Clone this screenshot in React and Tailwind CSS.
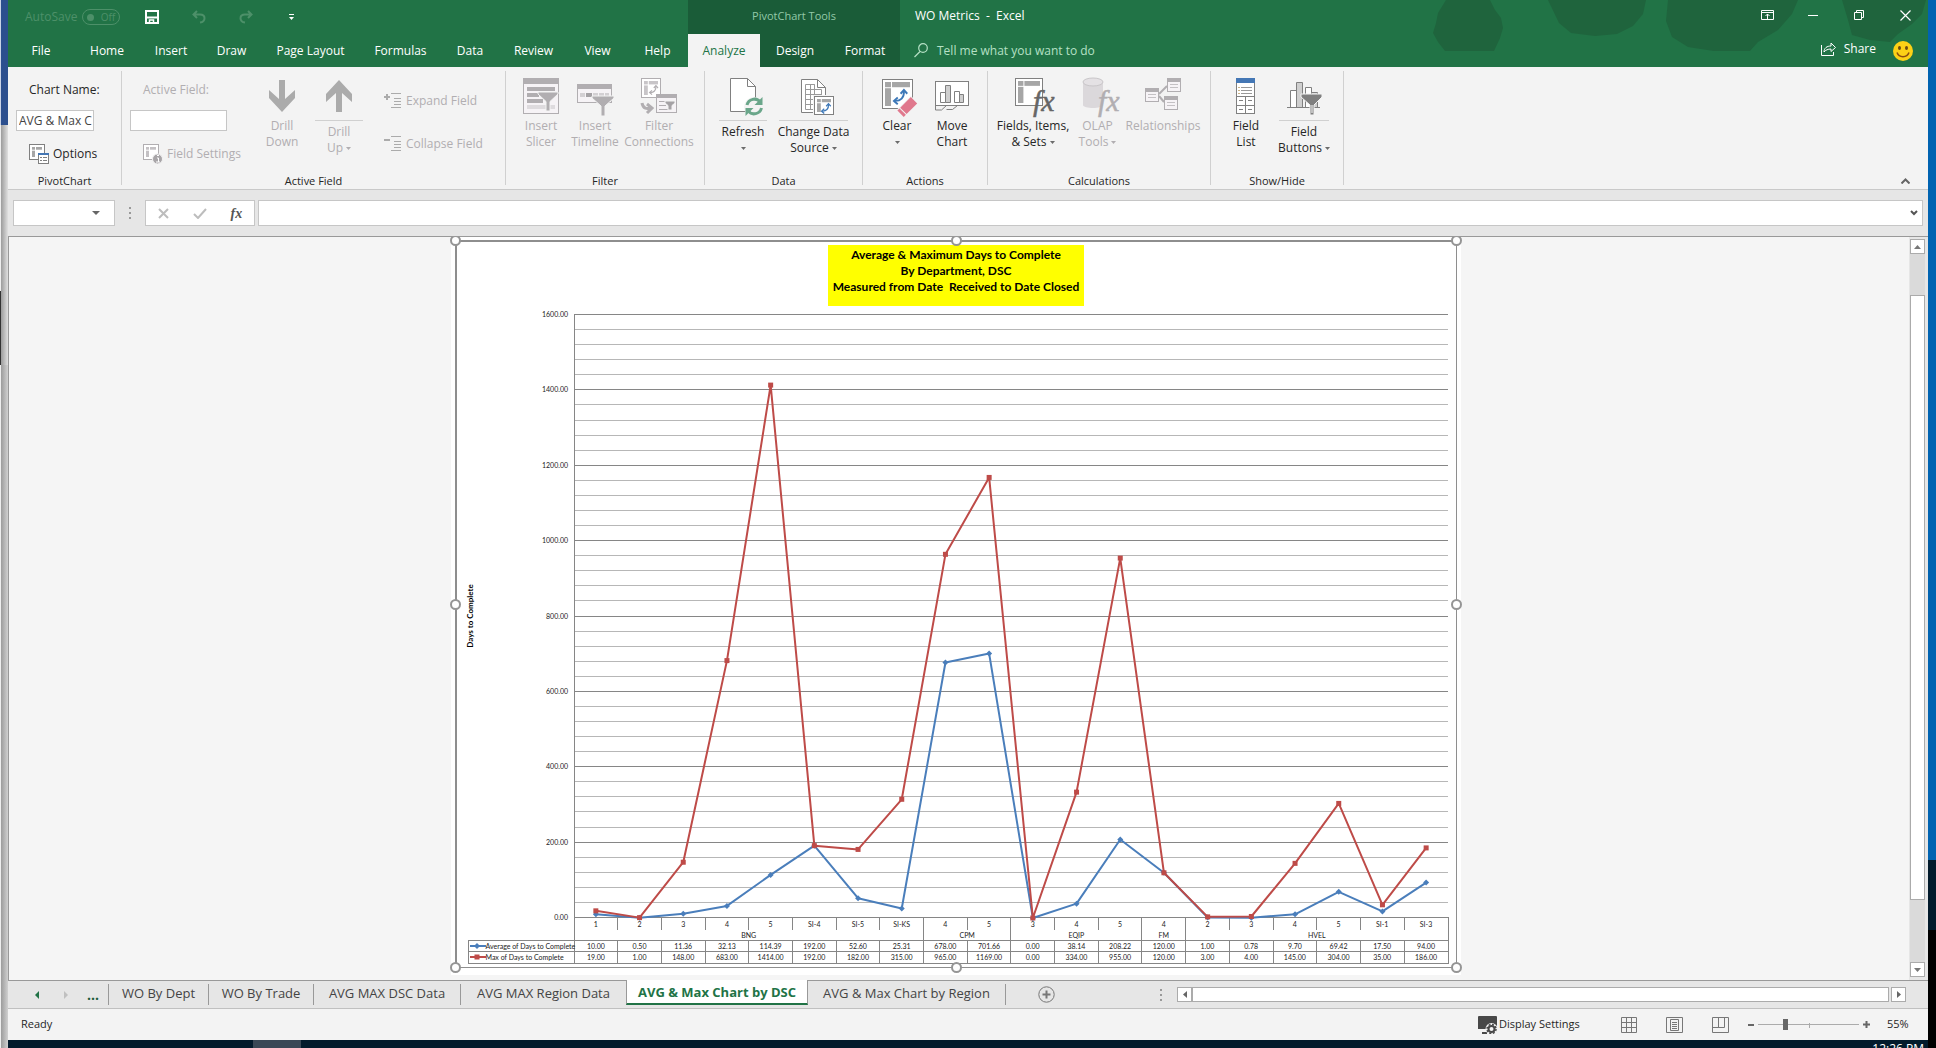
import clsx from 'clsx'

const categories = ['1', '2', '3', '4', '5', 'SI-4', 'SI-5', 'SI-KS', '4', '5', '3', '4', '5', '4', '2', '3', '4', '5', 'SI-1', 'SI-3']
const groups = [
  { name: 'BNG', span: 8 },
  { name: 'CPM', span: 2 },
  { name: 'EQIP', span: 3 },
  { name: 'FM', span: 1 },
  { name: 'HVEL', span: 6 },
]
const series = [
  {
    name: 'Average of Days to Complete',
    color: '#4a7ebb',
    marker: 'diamond',
    values: [10, 0.5, 11.36, 32.13, 114.39, 192, 52.6, 25.31, 678, 701.66, 0, 38.14, 208.22, 120, 1, 0.78, 9.7, 69.42, 17.5, 94],
  },
  {
    name: 'Max of Days to Complete',
    color: '#be4b48',
    marker: 'square',
    values: [19, 1, 148, 683, 1414, 192, 182, 315, 965, 1169, 0, 334, 955, 120, 3, 4, 145, 304, 35, 186],
  },
]

const tabs = [
  { label: 'File', width: 'w-[66px]' },
  { label: 'Home', width: 'w-[66px]' },
  { label: 'Insert', width: 'w-[62px]' },
  { label: 'Draw', width: 'w-[59px]' },
  { label: 'Page Layout', width: 'w-[99px]' },
  { label: 'Formulas', width: 'w-[81px]' },
  { label: 'Data', width: 'w-[58px]' },
  { label: 'Review', width: 'w-[69px]' },
  { label: 'View', width: 'w-[59px]' },
  { label: 'Help', width: 'w-[61px]' },
]

const sheets = [
  { label: 'WO By Dept', width: 'w-[100px]' },
  { label: 'WO By Trade', width: 'w-[105px]' },
  { label: 'AVG MAX DSC Data', width: 'w-[147px]' },
  { label: 'AVG MAX Region Data', width: 'w-[165px]', last: true },
  { label: 'AVG & Max Chart by DSC', width: 'w-[182px]', active: true },
  { label: 'AVG & Max Chart by Region', width: 'w-[198px]' },
]

/* ---------- icons ---------- */

function Icon({ children, size = 40 }) {
  return (
    <svg width={size} height={size} viewBox={`0 0 ${size} ${size}`} className="block shrink-0 overflow-visible" aria-hidden="true">
      {children}
    </svg>
  )
}

function PivotGrid({ x, y, w, h, line = '#808080', fill = '#a6a6a6' }) {
  return (
    <g>
      <rect x={x + 0.5} y={y + 0.5} width={w} height={h} fill="#fff" stroke={line} />
      <rect x={x + 3} y={y + 3} width={w * 0.2} height={h * 0.18} fill={fill} />
      <rect x={x + 4 + w * 0.2} y={y + 3} width={w * 0.8 - 6} height={h * 0.18} fill={fill} />
      <rect x={x + 3} y={y + 4 + h * 0.18} width={w * 0.2} height={h * 0.82 - 6} fill={fill} />
    </g>
  )
}

function SwapArrows({ x, y, s = 1, color = '#3d78b8' }) {
  return (
    <g transform={`translate(${x} ${y}) scale(${s})`} fill="none" stroke={color} strokeWidth="2">
      <path d="M1.500 12.500C8 13 12 9 11.500 2" />
      <path d="M8 5l3.500-4L15 5M5 9l-4 3.500L5 16" />
    </g>
  )
}

function Funnel({ x, y, w, h, color }) {
  return (
    <path
      transform={`translate(${x} ${y})`}
      d={`M0 0H${w}V2L${w / 2 + 2} ${h * 0.5}V${h}H${w / 2 - 2}V${h * 0.5}L0 2Z`}
      fill={color}
      stroke="#f3f3f3"
      strokeWidth="1"
    />
  )
}

function DrillIcon({ up }) {
  return (
    <Icon>
      <path
        d="M17 4h6v19l10-9v8L20 36 7 22v-8l10 9z"
        fill="#ababab"
        transform={up ? 'rotate(180 20 20)' : undefined}
      />
    </Icon>
  )
}

function SlicerIcon() {
  return (
    <Icon>
      <rect x="2.500" y="2.500" width="35" height="35" fill="#f6f3f6" stroke="#b1aeb1" />
      <path d="M2 2h36v6H2z" fill="#b1aeb1" />
      <path d="M6 11h28v4H6zM6 17h12v4H6zM6 23h16v4H6z" fill="#b1aeb1" />
      <path d="M6 29h28v4H6z" fill="#dedbde" />
      <Funnel x={17} y={16} w={20} h={19} color="#b1aeb1" />
    </Icon>
  )
}

function TimelineIcon() {
  return (
    <Icon>
      <rect x="2.500" y="8.500" width="34" height="18" fill="#f6f3f6" stroke="#b1aeb1" />
      <path d="M2 8h35v5H2z" fill="#b1aeb1" />
      <path d="M5 17h5v4H5zM18 17h5v4h-5zM24 17h5v4h-5zM30 17h4v4h-4z" fill="#d3d0d3" />
      <path d="M11 17h6v4h-6z" fill="#a5a2a5" />
      <Funnel x={17} y={20} w={22} h={20} color="#b1aeb1" />
    </Icon>
  )
}

function FilterConnectionsIcon() {
  return (
    <Icon>
      <PivotGrid x={2} y={2} w={19} h={19} line="#b1aeb1" fill="#c8c5c8" />
      <SwapArrows x={10} y={9} s={0.6} color="#b1aeb1" />
      <rect x="17.500" y="18.500" width="20" height="18" fill="#f6f3f6" stroke="#b1aeb1" />
      <path d="M17 18h21v4H17z" fill="#b1aeb1" />
      <path d="M20 25h8v1h-8zM20 29h7v1h-7zM20 33h10v1H20z" fill="#b1aeb1" />
      <Funnel x={26} y={25} w={10} h={9} color="#a5a2a5" />
      <path d="M3 27c1 6 5 6 9 5M8 28l5 4-5 5" fill="none" stroke="#b1aeb1" strokeWidth="3" />
    </Icon>
  )
}

function RefreshIcon() {
  return (
    <Icon>
      <path d="M7.500 2.500h17l8 8v25h-25z" fill="#fff" stroke="#808080" />
      <path d="M24.500 2.500v8h8" fill="none" stroke="#808080" />
      <circle cx="31" cy="31" r="10" fill="#f3f3f3" />
      <path d="M24 29c1.500-6 9.500-8 13-3M38.500 32c-1.500 6-9.500 8-13 3" fill="none" stroke="#6aa68a" strokeWidth="3" />
      <path d="M39.500 21v8h-8zM22.500 40v-8h8z" fill="#6aa68a" />
    </Icon>
  )
}

function ChangeSourceIcon() {
  return (
    <Icon>
      <path d="M7.500 3.500h16l8 8v25h-24z" fill="#fff" stroke="#808080" />
      <path d="M23.500 3.500v8h8" fill="none" stroke="#808080" />
      <path d="M11.500 8.500h9v5h7v20h-16zM11.500 13.500h9M11.500 18.500h16M11.500 23.500h16M11.500 28.500h16M16.500 8.500v25M20.500 8.500v25" fill="none" stroke="#999" />
      <rect x="19" y="19" width="21" height="20" fill="#f3f3f3" />
      <PivotGrid x={20} y={20} w={19} h={18} />
      <SwapArrows x={27} y={27} s={0.65} />
    </Icon>
  )
}

function ClearIcon() {
  return (
    <Icon>
      <PivotGrid x={5} y={3} w={30} h={29} />
      <SwapArrows x={16} y={13} s={0.95} />
      <g transform="rotate(-45 31 31)">
        <rect x="20" y="25" width="21" height="11" rx="1" fill="#f3f3f3" />
        <path d="M25 26h15v9H25zM21 26h3v9h-3z" fill="#e0788d" />
      </g>
    </Icon>
  )
}

function MoveChartIcon() {
  return (
    <Icon>
      <rect x="3.500" y="5.500" width="33" height="24" fill="#fff" stroke="#808080" />
      <path d="M8.500 16.500h5v10h-5zM22.500 15.500h5v11h-5z" fill="#fff" stroke="#808080" />
      <path d="M13.500 9.500h5v17h-5zM27.500 18.500h4v8h-4z" fill="#cfcfcf" stroke="#808080" />
      <path d="M3.500 29.500v4.500h6l5-4.500M14.500 33.500h6l5-4" fill="none" stroke="#808080" />
    </Icon>
  )
}

function Fx({ color }) {
  return (
    <text x="20" y="35" fontFamily="Liberation Serif, serif" fontStyle="italic" fontSize="30" fill={color} stroke={color} strokeWidth="0.500">
      fx
    </text>
  )
}

function FieldsItemsIcon() {
  return (
    <Icon>
      <PivotGrid x={2} y={2} w={27} h={27} />
      <Fx color="#666" />
    </Icon>
  )
}

function OlapIcon() {
  return (
    <Icon>
      <path d="M5 6v23c0 4 20 4 20 0V6z" fill="#dbd8db" />
      <ellipse cx="15" cy="6" rx="10" ry="4" fill="#e4e1e4" stroke="#c9c6c9" />
      <Fx color="#b1aeb1" />
    </Icon>
  )
}

function RelationshipsIcon() {
  const boxes = [[2, 12], [24, 2], [21, 20]]
  return (
    <Icon>
      <path d="M16 18l8-8M16 20l5 6" stroke="#b1aeb1" strokeWidth="2" />
      {boxes.map(([x, y]) => (
        <g key={x}>
          <rect x={x + 0.5} y={y + 0.5} width="13" height="13" fill="#f6f3f6" stroke="#b1aeb1" />
          <path d={`M${x} ${y}h14v4h-14z`} fill="#b1aeb1" />
          <path d={`M${x + 3} ${y + 6.5}h8M${x + 3} ${y + 9.5}h8`} stroke="#c4c1c4" />
        </g>
      ))}
    </Icon>
  )
}

function FieldListIcon() {
  return (
    <Icon>
      <rect x="10.500" y="2.500" width="18" height="35" fill="#fff" stroke="#808080" />
      <path d="M10 2h19v5H10z" fill="#4477b5" />
      <path d="M15 11.500h11M15 14.500h11M15 17.500h11" stroke="#999" />
      <path d="M12 11.500h2M12 14.500h2M12 17.500h2" stroke="#c9b285" />
      <path d="M10.500 20.500h18M10.500 29.500h18M19.500 20.500v17M13 24.500h4M22 24.500h4M13 33.500h4M22 33.500h4" stroke="#808080" />
    </Icon>
  )
}

function FieldButtonsIcon() {
  return (
    <Icon>
      <path d="M6.500 14.500h6v17h-6zM21.500 11.500h6v20h-6z" fill="#fff" stroke="#808080" />
      <path d="M12.500 6.500h6v25h-6zM27.500 16.500h6v15h-6z" fill="#cfcfcf" stroke="#808080" />
      <path d="M3 31.500h33" stroke="#808080" />
      <path d="M17 18h21v3l-8 8v10h-4V29l-9-8z" fill="#808080" stroke="#f3f3f3" />
      <path d="M28 29v8" stroke="#fff" />
    </Icon>
  )
}

function OptionsIcon({ disabled }) {
  const line = disabled ? '#b1aeb1' : '#808080'
  return (
    <Icon size={20}>
      <PivotGrid x={0} y={0} w={15} h={15} line={line} fill={disabled ? '#c4c1c4' : '#a6a6a6'} />
      {disabled ? (
        <>
          <circle cx="14.500" cy="15" r="5" fill="#a8a5a8" stroke="#f3f3f3" />
          <path d="M14 11.500h2M14 14h1.500v4M13 18h4" stroke="#fff" fill="none" />
        </>
      ) : (
        <>
          <rect x="9.500" y="9.500" width="10" height="10" fill="#fff" stroke="#808080" />
          <path d="M9 9h11v2H9z" fill="#4477b5" />
          <path d="M11 13.500h2M11 16.500h2M14 13.500h4M14 16.500h4" stroke="#808080" />
        </>
      )}
    </Icon>
  )
}

function ExpandIcon({ minus }) {
  return (
    <Icon size={18}>
      <path d={minus ? 'M0 5h6' : 'M0 5h6M3 2v6'} stroke="#ababab" strokeWidth="2" />
      <path d="M7 1.500h10M10 6.500h7M10 9.500h7M10 12.500h7M7 15.500h10" stroke="#ababab" fill="none" />
    </Icon>
  )
}

function Caret({ className }) {
  return (
    <svg width="5" height="3" viewBox="0 0 5 3" className={clsx('inline-block shrink-0 fill-current', className)} aria-hidden="true">
      <path d="M0 0h5L2.500 3z" />
    </svg>
  )
}

/* ---------- title bar and tabs ---------- */

function Clouds() {
  return (
    <svg className="absolute right-0 top-0" width="500" height="67" viewBox="0 0 500 67" aria-hidden="true">
      <g fill="#1f643d">
        <path d="M18 0h44l5 10 6 8 2 10-3 10-6 13H17l-7-9-5-9 3-10 2-10z" />
        <path d="M120 0h98l-3 14-10 12-16 8-22 2-24-3-12-10z" />
        <path d="M240 0h130l-6 14-14 16-20 12-8 9h-36l-26-4-16-10-6-16z" />
        <path d="M414 0h84l-4 14-10 10-14 10-8 8-20-2-18-5-4-15z" />
      </g>
    </svg>
  )
}

function TitleBar() {
  return (
    <div className="flex h-[34px]">
      <div className="flex w-[680px] items-center pl-[17px]">
        <span className="w-[57px] text-[#4d9069]">AutoSave</span>
        <button aria-label="AutoSave off" className="flex h-4 w-[38px] items-center justify-around rounded-full border border-[#4d9069] text-[10px] text-[#4d9069]">
          <span className="size-[7px] rounded-full bg-[#4d9069]" />
          Off
        </button>
        <button aria-label="Save" className="ml-[25px]">
          <svg width="14" height="14" viewBox="0 0 14 14" fill="none" stroke="#fff" strokeWidth="2">
            <path d="M1 1h12v12H1zM2 7.500h10" />
            <path d="M4.500 13v-3h4v3" strokeWidth="1.500" />
          </svg>
        </button>
        <button aria-label="Undo" className="ml-[33px]">
          <svg width="14" height="14" viewBox="0 0 14 14" fill="none" stroke="#4d9069" strokeWidth="2">
            <path d="M5 1L1.500 4.500 5 8M2 4.500h6c6 0 6 7 0 8" />
          </svg>
        </button>
        <button aria-label="Redo" className="ml-[33px]">
          <svg width="14" height="14" viewBox="0 0 14 14" fill="none" stroke="#4d9069" strokeWidth="2">
            <path d="M9 1l3.500 3.500L9 8M12 4.500H6c-6 0-6 7 0 8" />
          </svg>
        </button>
        <button aria-label="Customize toolbar" className="ml-[36px] flex flex-col items-center gap-[2px] text-white">
          <span className="h-px w-[5px] bg-white" />
          <Caret />
        </button>
      </div>
      <div className="flex w-[212px] items-center justify-center bg-[#1a5c38] pb-[2px] text-[11px] text-[#93c9a8]">PivotChart Tools</div>
      <div className="flex flex-1 items-center whitespace-pre pl-[15px] pb-[2px] text-white">WO Metrics  -  Excel</div>
      <div className="relative flex pb-1 text-white">
        <button aria-label="Ribbon display options" className="flex w-[46px] items-center justify-center">
          <svg width="13" height="10" viewBox="0 0 13 10" fill="none" stroke="currentColor">
            <path d="M.5.5h12v9H.5zM.5 2.500h12M6.500 9V4M4.500 6l2-2 2 2" />
          </svg>
        </button>
        <button aria-label="Minimize" className="flex w-[46px] items-center justify-center">
          <span className="h-px w-[10px] bg-white" />
        </button>
        <button aria-label="Restore" className="flex w-[46px] items-center justify-center">
          <svg width="10" height="10" viewBox="0 0 10 10" fill="none" stroke="currentColor">
            <path d="M.5 2.500h7v7h-7zM2.500 2.500v-2h7v7h-2" />
          </svg>
        </button>
        <button aria-label="Close" className="flex w-[46px] items-center justify-center">
          <svg width="11" height="11" viewBox="0 0 11 11" fill="none" stroke="currentColor" strokeWidth="1.200">
            <path d="M.5.5l10 10M10.500.5l-10 10" />
          </svg>
        </button>
      </div>
    </div>
  )
}

function TabRow() {
  return (
    <div className="flex h-[33px] text-white">
      {tabs.map((tab) => (
        <button key={tab.label} className={clsx('shrink-0 text-center', tab.width)}>{tab.label}</button>
      ))}
      <div className="flex w-[212px] shrink-0 bg-[#1a5c38]">
        <button className="w-[72px] bg-[#f3f3f3] text-[#217346]">Analyze</button>
        <button className="w-[70px]">Design</button>
        <button className="w-[70px]">Format</button>
      </div>
      <button className="flex flex-1 items-center gap-[9px] pl-[14px] text-[#b5e0c5]">
        <svg width="14" height="15" viewBox="0 0 14 15" fill="none" stroke="currentColor" strokeWidth="1.200">
          <circle cx="9" cy="5" r="4.300" />
          <path d="M6 8.500L.5 14" />
        </svg>
        Tell me what you want to do
      </button>
      <button className="relative mr-[17px] flex items-center gap-2 pb-1">
        <svg width="15" height="14" viewBox="0 0 15 14" fill="none" stroke="currentColor">
          <path d="M.5 3v10.500h12V10M3 10c0-4 3-6 7-6V1l4.500 4.500L10 9.500V7C7 7 4.500 8 3 10z" />
        </svg>
        Share
      </button>
      <button aria-label="Send a smile" className="relative mr-[15px]">
        <svg width="20" height="20" viewBox="0 0 20 20">
          <circle cx="10" cy="10" r="10" fill="#fcd116" />
          <ellipse cx="6.500" cy="7" rx="1.500" ry="2" fill="#6b4a12" />
          <ellipse cx="13.500" cy="7" rx="1.500" ry="2" fill="#6b4a12" />
          <path d="M4 11.500c2 5.500 10 5.500 12 0" fill="none" stroke="#8a4d12" strokeWidth="1.500" />
        </svg>
      </button>
    </div>
  )
}

/* ---------- ribbon ---------- */

function RibbonGroup({ label, width, className, children }) {
  return (
    <section className={clsx('my-1 flex shrink-0 flex-col border-r border-[#d0d0d0]', width)}>
      <div className={clsx('flex flex-1', className)}>{children}</div>
      <div className="h-[10px] text-center text-[11px] leading-[12px] text-[#262626]">{label}</div>
    </section>
  )
}

function BigButton({ icon, lines, width, split, caret, disabled }) {
  return (
    <button
      disabled={disabled}
      className={clsx('flex shrink-0 flex-col items-center pt-[5px] leading-4', width, disabled ? 'text-[#b1aeb1]' : 'text-[#262626]')}
    >
      {icon}
      {split && <span className="mt-1 mb-[3px] h-px w-full bg-[#d0d0d0]" />}
      <span className={clsx('flex flex-col items-center whitespace-nowrap', !split && 'mt-[2px]')}>
        {lines.map((line, i) => (
          <span key={i} className="flex h-4 items-center gap-[3px]">
            {line}
            {caret && i === lines.length - 1 && <Caret className={disabled ? 'text-[#b1aeb1]' : 'text-[#6b6b6b]'} />}
          </span>
        ))}
      </span>
    </button>
  )
}

function Ribbon() {
  return (
    <div className="flex h-[123px] shrink-0 border-b border-[#c9c9c9] bg-[#f3f3f3]">
      <RibbonGroup label="PivotChart" width="w-[114px]" className="flex-col pl-2 pt-[10px]">
        <label htmlFor="chart-name" className="pl-[13px] leading-[18px] text-[#262626]">Chart Name:</label>
        <input id="chart-name" defaultValue="AVG & Max C" className="mt-[11px] h-[21px] w-[78px] border border-[#c6c6c6] bg-white pl-[2px] text-[#444] outline-none" />
        <button className="mt-[13px] flex items-center gap-1 pl-[13px] text-[#262626]">
          <OptionsIcon />
          Options
        </button>
      </RibbonGroup>

      <RibbonGroup label="Active Field" width="w-[384px]">
        <div className="flex w-[137px] flex-col pl-2 pt-[10px] text-[#b1aeb1]">
          <label htmlFor="active-field" className="pl-[13px] leading-[18px]">Active Field:</label>
          <input id="active-field" disabled className="mt-[11px] h-[21px] w-[97px] border border-[#c6c6c6] bg-white" />
          <button disabled className="mt-[13px] flex items-center gap-1 whitespace-nowrap pl-[13px]">
            <OptionsIcon disabled />
            Field Settings
          </button>
        </div>
        <BigButton icon={<DrillIcon />} lines={['Drill', 'Down']} width="w-[46px]" disabled />
        <div className="w-[10px]" />
        <BigButton icon={<DrillIcon up />} lines={['Drill', 'Up']} width="w-[48px]" split caret disabled />
        <div className="flex flex-col gap-[25px] pl-[21px] pt-[21px] text-[#b1aeb1]">
          <button disabled className="flex items-center gap-1">
            <ExpandIcon />
            Expand Field
          </button>
          <button disabled className="flex items-center gap-1">
            <ExpandIcon minus />
            Collapse Field
          </button>
        </div>
      </RibbonGroup>

      <RibbonGroup label="Filter" width="w-[199px]" className="gap-px pl-[10px]">
        <BigButton icon={<SlicerIcon />} lines={['Insert', 'Slicer']} width="w-[50px]" disabled />
        <BigButton icon={<TimelineIcon />} lines={['Insert', 'Timeline']} width="w-[56px]" disabled />
        <BigButton icon={<FilterConnectionsIcon />} lines={['Filter', 'Connections']} width="w-[70px]" disabled />
      </RibbonGroup>

      <RibbonGroup label="Data" width="w-[158px]" className="gap-3 pl-[14px]">
        <BigButton icon={<RefreshIcon />} lines={['Refresh', '']} width="w-[48px]" split caret />
        <BigButton icon={<ChangeSourceIcon />} lines={['Change Data', 'Source']} width="w-[69px]" split caret />
      </RibbonGroup>

      <RibbonGroup label="Actions" width="w-[125px]" className="gap-[7px] pl-[10px]">
        <BigButton icon={<ClearIcon />} lines={['Clear', '']} width="w-[48px]" caret />
        <BigButton icon={<MoveChartIcon />} lines={['Move', 'Chart']} width="w-[48px]" />
      </RibbonGroup>

      <RibbonGroup label="Calculations" width="w-[223px]" className="gap-[6px] pl-[10px]">
        <BigButton icon={<FieldsItemsIcon />} lines={['Fields, Items,', '& Sets']} width="w-[70px]" caret />
        <BigButton icon={<OlapIcon />} lines={['OLAP', 'Tools']} width="w-[47px]" caret disabled />
        <BigButton icon={<RelationshipsIcon />} lines={['Relationships']} width="w-[72px]" disabled />
      </RibbonGroup>

      <RibbonGroup label="Show/Hide" width="w-[133px]" className="gap-[10px] pl-3">
        <BigButton icon={<FieldListIcon />} lines={['Field', 'List']} width="w-[46px]" />
        <BigButton icon={<FieldButtonsIcon />} lines={['Field', 'Buttons']} width="w-[50px]" split caret />
      </RibbonGroup>

      <div className="flex flex-1 items-end justify-end pb-[5px] pr-[18px]">
        <button aria-label="Collapse the ribbon">
          <svg width="9" height="6" viewBox="0 0 9 6" fill="none" stroke="#666" strokeWidth="2">
            <path d="M.5 5.500l4-4 4 4" />
          </svg>
        </button>
      </div>
    </div>
  )
}

function FormulaBar() {
  return (
    <div className="flex h-[46px] shrink-0 items-center bg-[#e6e6e6] pl-[5px] pr-[5px]">
      <div className="flex h-[26px] w-[102px] items-center border border-[#c6c6c6] bg-white">
        <input aria-label="Name box" className="w-[78px] outline-none" />
        <button aria-label="Name list">
          <svg width="8" height="4" viewBox="0 0 8 4" className="fill-[#666]"><path d="M0 0h8L4 4z" /></svg>
        </button>
      </div>
      <Dots className="ml-[14px]" />
      <div className="ml-[14px] flex h-[26px] w-[110px] items-center justify-around border border-[#c6c6c6] bg-white">
        <button aria-label="Cancel">
          <svg width="12" height="11" viewBox="0 0 12 11" fill="none" stroke="#bdbdbd" strokeWidth="2"><path d="M1 1l9 9M10 1l-9 9" /></svg>
        </button>
        <button aria-label="Enter">
          <svg width="14" height="11" viewBox="0 0 14 11" fill="none" stroke="#bdbdbd" strokeWidth="2"><path d="M1 6l4 4 8-9" /></svg>
        </button>
        <button className="font-['Liberation_Serif',serif] text-[14px] font-bold italic text-[#555]">fx</button>
      </div>
      <div className="ml-[3px] flex h-[26px] flex-1 items-center border border-[#c6c6c6] bg-white pr-1">
        <input aria-label="Formula" className="flex-1 outline-none" />
        <button aria-label="Expand formula bar">
          <svg width="8" height="6" viewBox="0 0 8 6" fill="none" stroke="#555" strokeWidth="2"><path d="M1 1l3 3 3-3" /></svg>
        </button>
      </div>
    </div>
  )
}

function Dots({ className }) {
  return (
    <span className={clsx('flex flex-col gap-[3px]', className)}>
      <span className="size-[2px] bg-[#999]" />
      <span className="size-[2px] bg-[#999]" />
      <span className="size-[2px] bg-[#999]" />
    </span>
  )
}

/* ---------- chart ---------- */

const PLOT = { left: 117, right: 991, top: 8, bottom: 611, max: 1600 }
const xAt = (i) => PLOT.left + ((PLOT.right - PLOT.left) / 20) * (i + 0.5)
const yAt = (v) => PLOT.bottom - ((PLOT.bottom - PLOT.top) * v) / PLOT.max

function Marker({ type, x, y, color }) {
  if (type === 'square') return <rect x={x - 2.5} y={y - 2.5} width="5" height="5" fill={color} />
  return <path d={`M${x} ${y - 3}L${x + 3} ${y}L${x} ${y + 3}L${x - 3} ${y}Z`} fill={color} />
}

function Plot() {
  const lines = Array.from({ length: 41 }, (_, i) => i * 40)
  return (
    <svg width="998" height="611" className="relative block overflow-visible" fontFamily="Lato, sans-serif">
      {lines.map((v) => {
        const y = Math.round(yAt(v)) + 0.5
        return <line key={v} x1={PLOT.left} x2={PLOT.right} y1={y} y2={y} stroke={v % 200 === 0 ? '#868686' : '#b7b7b7'} />
      })}
      <line x1={PLOT.left + 0.5} x2={PLOT.left + 0.5} y1={PLOT.top} y2={PLOT.bottom} stroke="#868686" />
      {lines.filter((v) => v % 200 === 0).map((v) => (
        <text key={v} x="111" y={Math.round(yAt(v)) + 3} fontSize="7" textAnchor="end" fill="#222">{v.toFixed(2)}</text>
      ))}
      <text transform="translate(16 310) rotate(-90)" fontSize="8" fontWeight="bold" textAnchor="middle">Days to Complete</text>
      {series.map((s) => (
        <g key={s.name}>
          <polyline points={s.values.map((v, i) => `${xAt(i)},${yAt(v) + 1}`).join(' ')} fill="none" stroke={s.color} strokeWidth="2" strokeLinejoin="round" />
          {s.values.map((v, i) => <Marker key={i} type={s.marker} x={xAt(i)} y={yAt(v) + 1} color={s.color} />)}
        </g>
      ))}
    </svg>
  )
}

function DataTable() {
  return (
    <table className="ml-[11px] w-[981px] table-fixed border-collapse text-center text-[7px] leading-[8px] text-[#222]">
      <colgroup>
        <col className="w-[106px]" />
      </colgroup>
      <thead>
        <tr className="h-[13px]">
          <td />
          {categories.map((c, i) => (
            <th key={i} scope="col" className="border-x border-[#868686] p-0 font-normal">{c}</th>
          ))}
        </tr>
        <tr className="h-[10px]">
          <td />
          {groups.map((g) => (
            <th key={g.name} scope="colgroup" colSpan={g.span} className="border-x border-[#868686] p-0 font-normal">{g.name}</th>
          ))}
        </tr>
      </thead>
      <tbody>
        {series.map((s, row) => (
          <tr key={s.name} className={row === 0 ? 'h-[11px]' : 'h-[12px]'}>
            <th scope="row" className="border border-[#868686] p-0 font-normal">
              <span className="flex items-center whitespace-nowrap pl-px">
                <svg width="16" height="6" viewBox="0 0 16 6" className="shrink-0" aria-hidden="true">
                  <path d="M0 3h16" stroke={s.color} strokeWidth="2" />
                  <Marker type={s.marker} x={7} y={3} color={s.color} />
                </svg>
                {s.name}
              </span>
            </th>
            {s.values.map((v, i) => (
              <td key={i} className="border border-[#868686] p-0">{v.toFixed(2)}</td>
            ))}
          </tr>
        ))}
      </tbody>
    </table>
  )
}

function Handle({ className }) {
  return <span className={clsx('absolute size-[11px] rounded-full border-2 border-[#959595] bg-white', className)} />
}

function ChartSheet() {
  return (
    <div className="flex min-w-0 flex-1 justify-center overflow-hidden pr-[7px]">
      <div className="w-[1010px] self-start bg-white px-1 pt-[3px] pb-[7px] font-[Lato,sans-serif]">
        <div className="relative h-[728px] border-t-2 border-r border-b border-l-2 border-[#8e8e8e]">
          <h1 className="mx-auto mt-[3px] h-[61px] w-[256px] whitespace-pre bg-[#ffff00] pt-[2px] text-center text-[12px] leading-4 font-bold text-black">
            Average &amp; Maximum Days to Complete<br />
            By Department, DSC<br />
            {'Measured from Date  Received to Date Closed'}
          </h1>
          <Plot />
          <DataTable />
          <Handle className="-left-[7px] -top-[7px]" />
          <Handle className="left-1/2 -ml-[5px] -top-[7px]" />
          <Handle className="-right-[6px] -top-[7px]" />
          <Handle className="-left-[7px] top-1/2 -mt-[6px]" />
          <Handle className="-right-[6px] top-1/2 -mt-[6px]" />
          <Handle className="-bottom-[6px] -left-[7px]" />
          <Handle className="-bottom-[6px] left-1/2 -ml-[5px]" />
          <Handle className="-bottom-[6px] -right-[6px]" />
        </div>
      </div>
    </div>
  )
}

function VerticalScroll() {
  return (
    <div className="flex w-[19px] shrink-0 flex-col bg-[#e6e6e6] px-px pb-[3px] pt-[2px]">
      <button aria-label="Scroll up" className="flex h-[15px] w-[15px] items-center justify-center border border-[#ababab] bg-white">
        <svg width="7" height="4" viewBox="0 0 7 4" className="fill-[#777]"><path d="M0 4h7L3.500 0z" /></svg>
      </button>
      <div className="flex w-[15px] flex-1 flex-col bg-[#dadada] pt-[41px] pb-[62px]">
        <div className="flex-1 border border-[#ababab] bg-white" />
      </div>
      <button aria-label="Scroll down" className="flex h-[15px] w-[15px] items-center justify-center border border-[#ababab] bg-white">
        <svg width="7" height="4" viewBox="0 0 7 4" className="fill-[#777]"><path d="M0 0h7L3.500 4z" /></svg>
      </button>
    </div>
  )
}

/* ---------- bottom bars ---------- */

function SheetTabs() {
  return (
    <div className="flex h-[29px] shrink-0 border-t border-b border-t-[#999] border-b-[#c0c0c0] bg-[#e6e6e6] text-[13px] text-[#444]">
      <div className="flex w-[101px] items-center border-r border-[#999] pl-[27px] my-[3px]">
        <button aria-label="Previous sheets" className="w-[29px]">
          <svg width="4" height="8" viewBox="0 0 4 8" className="fill-[#217346]"><path d="M4 0v8L0 4z" /></svg>
        </button>
        <button aria-label="Next sheets" className="w-[23px]">
          <svg width="4" height="8" viewBox="0 0 4 8" className="fill-[#c0c0c0]"><path d="M0 0v8l4-4z" /></svg>
        </button>
        <button className="text-[14px] leading-4 font-bold text-[#1d5c3a]">...</button>
      </div>
      {sheets.map((sheet) =>
        sheet.active ? (
          <button key={sheet.label} className={clsx('-mt-px mb-[3px] shrink-0 whitespace-nowrap border-x border-b-2 border-x-[#999] border-b-[#217346] bg-white pt-[3px] font-bold text-[#217346]', sheet.width)}>
            {sheet.label}
          </button>
        ) : (
          <button key={sheet.label} className={clsx('my-[3px] shrink-0 whitespace-nowrap pb-[2px]', sheet.width, !sheet.last && 'border-r border-[#999]')}>
            {sheet.label}
          </button>
        ),
      )}
      <button aria-label="New sheet" className="ml-[32px]">
        <svg width="17" height="17" viewBox="0 0 17 17" fill="none" stroke="#777">
          <circle cx="8.500" cy="8.500" r="7.700" />
          <path d="M4.500 8.500h8M8.500 4.500v8" strokeWidth="2" />
        </svg>
      </button>
      <div className="flex flex-1 items-center pl-[105px] pr-[22px]">
        <Dots />
        <button aria-label="Scroll left" className="ml-[15px] flex size-[15px] items-center justify-center border border-[#ababab] bg-white">
          <svg width="4" height="7" viewBox="0 0 4 7" className="fill-[#666]"><path d="M4 0v7L0 3.500z" /></svg>
        </button>
        <div className="h-[15px] flex-1 border border-[#ababab] bg-white" />
        <button aria-label="Scroll right" className="ml-[2px] flex size-[15px] items-center justify-center border border-[#ababab] bg-white">
          <svg width="4" height="7" viewBox="0 0 4 7" className="fill-[#666]"><path d="M0 0v7l4-3.500z" /></svg>
        </button>
      </div>
    </div>
  )
}

function StatusBar() {
  return (
    <div className="flex h-[31px] shrink-0 items-center bg-[#f3f3f3] pl-[13px] pr-[18px] text-[11px] text-[#262626]">
      <span className="flex-1">Ready</span>
      <button className="flex w-[143px] items-center gap-[2px] whitespace-nowrap">
        <svg width="19" height="18" viewBox="0 0 19 18" className="shrink-0">
          <path d="M1 0h17a1 1 0 011 1v12H0V1a1 1 0 011-1zM4 16h5v2H4z" fill="#484848" />
          <circle cx="13.500" cy="13" r="6" fill="#f3f3f3" />
          <circle cx="13.500" cy="13" r="3" fill="none" stroke="#484848" strokeWidth="2" />
          <circle cx="13.500" cy="13" r="4.500" fill="none" stroke="#484848" strokeWidth="1.500" strokeDasharray="2 1.530" />
        </svg>
        Display Settings
      </button>
      <button aria-label="Normal view" className="mr-[29px]">
        <svg width="16" height="16" viewBox="0 0 16 16" fill="none" stroke="#777">
          <path d="M.5.5h15v15H.5zM.5 5.500h15M.5 10.500h15M5.500.5v15M10.500.5v15" />
        </svg>
      </button>
      <button aria-label="Page layout view" className="mr-[29px]">
        <svg width="17" height="16" viewBox="0 0 17 16" fill="none" stroke="#777">
          <path d="M.5.5h16v15H.5zM4.500 2.500h8v11h-8zM6 5.500h5M6 7.500h5M6 9.500h5M6 11.500h5" />
        </svg>
      </button>
      <button aria-label="Page break view" className="mr-[19px]">
        <svg width="17" height="16" viewBox="0 0 17 16" fill="none" stroke="#777">
          <path d="M.5.5h16v15H.5zM1 10.500h11.500V1M6.500 1v9" />
        </svg>
      </button>
      <button aria-label="Zoom out" className="h-[2px] w-[6px] bg-[#666]" />
      <div className="relative mx-1 flex h-3 w-[101px] items-center">
        <span className="absolute left-1/2 top-[4px] h-[5px] w-px bg-[#aaa]" />
        <input
          type="range"
          aria-label="Zoom"
          min="0"
          max="100"
          defaultValue="26"
          className="relative h-px w-full appearance-none bg-[#ababab] [&::-webkit-slider-thumb]:h-[11px] [&::-webkit-slider-thumb]:w-[5px] [&::-webkit-slider-thumb]:appearance-none [&::-webkit-slider-thumb]:bg-[#666]"
        />
      </div>
      <button aria-label="Zoom in">
        <svg width="7" height="7" viewBox="0 0 7 7" stroke="#666" strokeWidth="2"><path d="M0 3.500h7M3.500 0v7" /></svg>
      </button>
      <span className="ml-[17px] w-[23px]">55%</span>
    </div>
  )
}

/* ---------- desktop around the window ---------- */

function LeftEdge() {
  return (
    <div className="flex w-2 shrink-0 flex-col">
      <div className="h-[125px] border-l border-[#c9d3e6] bg-[#2c4f8e]" />
      <div className="h-[166px] border-l border-[#eee] bg-linear-to-r from-[#9c9c9c] to-[#e0e0e0]" />
      <div className="h-[74px] border-l border-[#333] bg-linear-to-r from-[#9c9c9c] to-[#e0e0e0]" />
      <div className="flex-1 border-l border-[#eee] bg-linear-to-r from-[#9c9c9c] to-[#d0d0d0]" />
    </div>
  )
}

function App() {
  return (
    <div className="flex h-screen overflow-hidden bg-[#f5f5f5] font-['Open_Sans',sans-serif] text-[12px]">
      <LeftEdge />
      <main className="flex min-w-0 flex-1 flex-col">
        <header className="relative shrink-0 bg-[#217346]">
          <Clouds />
          <TitleBar />
          <TabRow />
        </header>
        <Ribbon />
        <FormulaBar />
        <div className="flex min-h-0 flex-1 border-l border-t border-[#999]">
          <ChartSheet />
          <VerticalScroll />
        </div>
        <SheetTabs />
        <StatusBar />
        <footer className="flex h-2 shrink-0 justify-between overflow-hidden bg-[#031b2c] text-white">
          <span className="ml-[245px] w-12 bg-[#3a4856]" />
          <time className="mr-1 pt-px leading-[16px]">12:26 PM</time>
        </footer>
      </main>
      <div className="flex w-2 shrink-0 flex-col bg-[#0063b1]">
        <div className="flex-1" />
        <div className="h-[70px] bg-[#021a2b]" />
        <div className="h-[118px] bg-black" />
      </div>
    </div>
  )
}

export default App
